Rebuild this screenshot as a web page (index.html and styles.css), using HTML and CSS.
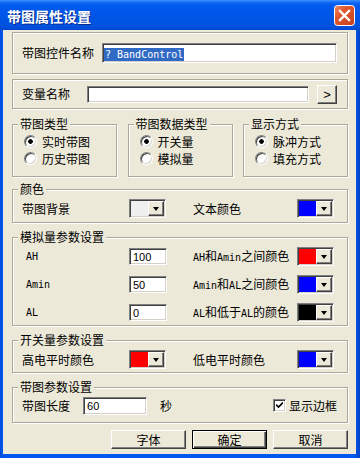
FILE: index.html
```html
<!DOCTYPE html>
<html lang="zh-CN">
<head>
    <meta charset="UTF-8">
    <title>带图属性设置</title>
    <link rel="stylesheet" href="styles.css">
</head>
<body>

<div class="window">
    <div class="titlebar">
        <span class="title">带图属性设置</span>
        <svg class="close" width="21" height="21" viewBox="0 0 21 21">
            <defs>
                <linearGradient id="closeFill" x1="0" y1="0" x2="1" y2="1">
                    <stop offset="0" stop-color="#ee8a6a"/>
                    <stop offset="0.35" stop-color="#e0582f"/>
                    <stop offset="1" stop-color="#c2401c"/>
                </linearGradient>
            </defs>
            <rect x="0.5" y="0.5" width="20" height="20" rx="3" fill="url(#closeFill)" stroke="#fff"/>
            <path d="M6 6 L15 15 M15 6 L6 15" stroke="#fff" stroke-width="2.4" stroke-linecap="square"/>
        </svg>
    </div>

    <div class="frame">
        <div class="client">
            <div class="box box-name">
                <span class="label">带图控件名称</span>
                <div class="edit name-edit"><span class="selected">? BandControl</span></div>
            </div>

            <div class="box box-var">
                <span class="label">变量名称</span>
                <div class="edit var-edit"></div>
                <button class="btn btn-small">&gt;</button>
            </div>

            <div class="types">
                <fieldset class="group type-group">
                    <legend>带图类型</legend>
                    <div class="radio checked"><span class="mark"></span>实时带图</div>
                    <div class="radio"><span class="mark"></span>历史带图</div>
                </fieldset>
                <fieldset class="group type-group">
                    <legend>带图数据类型</legend>
                    <div class="radio checked"><span class="mark"></span>开关量</div>
                    <div class="radio"><span class="mark"></span>模拟量</div>
                </fieldset>
                <fieldset class="group type-group">
                    <legend>显示方式</legend>
                    <div class="radio checked"><span class="mark"></span>脉冲方式</div>
                    <div class="radio"><span class="mark"></span>填充方式</div>
                </fieldset>
            </div>

            <fieldset class="group color-group">
                <legend>颜色</legend>
                <div class="param-row">
                    <span>带图背景</span>
                    <div class="picker"><span class="swatch swatch-light"></span><span class="drop"></span></div>
                    <span class="right-label">文本颜色</span>
                    <div class="picker"><span class="swatch swatch-blue"></span><span class="drop"></span></div>
                </div>
            </fieldset>

            <fieldset class="group analog-group">
                <legend>模拟量参数设置</legend>
                <div class="param-row analog">
                    <span class="ab lat">AH</span>
                    <div class="edit num-edit">100</div>
                    <span class="right-label"><span class="lat">AH</span>和<span class="lat">Amin</span>之间颜色</span>
                    <div class="picker"><span class="swatch swatch-red"></span><span class="drop"></span></div>
                </div>
                <div class="param-row analog">
                    <span class="ab lat">Amin</span>
                    <div class="edit num-edit">50</div>
                    <span class="right-label"><span class="lat">Amin</span>和<span class="lat">AL</span>之间颜色</span>
                    <div class="picker"><span class="swatch swatch-blue"></span><span class="drop"></span></div>
                </div>
                <div class="param-row analog">
                    <span class="ab lat">AL</span>
                    <div class="edit num-edit">0</div>
                    <span class="right-label"><span class="lat">AL</span>和低于<span class="lat">AL</span>的颜色</span>
                    <div class="picker"><span class="swatch swatch-black"></span><span class="drop"></span></div>
                </div>
            </fieldset>

            <fieldset class="group switch-group">
                <legend>开关量参数设置</legend>
                <div class="param-row">
                    <span>高电平时颜色</span>
                    <div class="picker"><span class="swatch swatch-red"></span><span class="drop"></span></div>
                    <span class="right-label">低电平时颜色</span>
                    <div class="picker"><span class="swatch swatch-blue"></span><span class="drop"></span></div>
                </div>
            </fieldset>

            <fieldset class="group band-group">
                <legend>带图参数设置</legend>
                <div class="band-row">
                    <span>带图长度</span>
                    <div class="edit len-edit">60</div>
                    <span class="unit">秒</span>
                    <span class="check">
                        <svg width="7" height="7" viewBox="0 0 7 7"><path d="M0 2.5 L2.5 5 L7 0.5" fill="none" stroke="#000" stroke-width="1.6"/></svg>
                    </span>
                    <span>显示边框</span>
                </div>
            </fieldset>

            <div class="buttons">
                <button class="btn">字体</button>
                <button class="btn btn-default">确定</button>
                <button class="btn">取消</button>
            </div>
        </div>
    </div>
</div>

</body>
</html>
```

FILE: styles.css
```css
* {
    box-sizing: border-box;
    margin: 0;
    padding: 0;
}

html, body {
    width: 360px;
    height: 458px;
    overflow: hidden;
}

body {
    font-family: "Noto Sans CJK SC", "Liberation Sans", sans-serif;
    font-size: 12px;
    line-height: 14px;
    color: #000;
    background: #0055e5;
}

.window {
    display: flex;
    flex-direction: column;
    height: 458px;
}

/* title bar */
.titlebar {
    height: 30px;
    display: flex;
    align-items: center;
    justify-content: space-between;
    padding: 1px 5px 0 7px;
    background: linear-gradient(#3d8fff 0, #0b63f2 3px, #0058ee 7px, #0055e6 18px, #0052df 26px, #0047d2 30px);
}

.title {
    color: #fff;
    font-weight: bold;
    font-size: 14px;
    text-shadow: 1px 1px 0 #0a2a8a;
}

.close {
    display: block;
}

.frame {
    flex: 1;
    padding: 0 4px 4px 3px;
    background: linear-gradient(to right, #0a48d6 0, #0058ee 2px, #0058ee 354px, #0045c8 360px);
}

.client {
    height: 100%;
    background: #ece9d8;
    padding: 2px 8px 0 9px;
    display: flex;
    flex-direction: column;
}

/* etched boxes */
.box, .group {
    border: 1px solid #aca899;
    box-shadow: inset 1px 1px 0 #fff, 1px 1px 0 #fff;
}

.box {
    display: flex;
    align-items: center;
    padding: 0 10px 0 9px;
}

.box-name {
    height: 42px;
}

.box-name .edit {
    flex: 1;
    height: 20px;
    margin-left: 8px;
    padding: 2px 0 0 1px;
}

.box-var {
    height: 30px;
    margin-top: 5px;
}

.var-edit {
    flex: 1;
    height: 17px;
    margin-left: 17px;
    margin-right: 8px;
}

.selected {
    display: inline-block;
    font-family: "DejaVu Sans Mono", monospace;
    font-size: 10px;
    line-height: 13px;
    color: #fff;
    background: #316ac5;
    padding: 0 1px;
}

/* latin text set half-width, like the dialog's system font */
.lat {
    font-family: "DejaVu Sans Mono", monospace;
    font-size: 10px;
}

/* sunken edit */
.edit {
    background: #fff;
    border: 1px solid;
    border-color: #808080 #fff #fff #808080;
    box-shadow: inset 1px 1px 0 #404040, inset -1px -1px 0 #d4d0c8;
}

.num-edit, .len-edit {
    font-family: "Liberation Sans", sans-serif;
    font-size: 11px;
    line-height: 14px;
    padding: 1px 0 0 3px;
}

.num-edit {
    width: 38px;
    height: 17px;
}

/* raised buttons */
.btn {
    font-family: "Noto Sans CJK SC", "Liberation Sans", sans-serif;
    font-size: 12px;
    background: #ece9d8;
    border: 1px solid;
    border-color: #fff #404040 #404040 #fff;
    box-shadow: inset -1px -1px 0 #808080;
    color: #000;
}

.btn-small {
    width: 20px;
    height: 19px;
    font-family: "Liberation Sans", sans-serif;
    font-size: 13px;
    line-height: 15px;
}

.btn-default {
    border-color: #000;
    box-shadow: inset 1px 1px 0 #fff, inset -1px -1px 0 #404040, inset -2px -2px 0 #808080;
}

/* group boxes */
.group {
    padding: 0;
    min-width: 0;
}

.group legend {
    margin-left: 5px;
    padding: 0 2px;
    line-height: 14px;
    background: #ece9d8;
}

.types {
    display: flex;
    justify-content: space-between;
    margin-top: 8px;
}

.type-group {
    width: 105px;
    height: 60px;
    padding-top: 2px;
}

.radio {
    display: flex;
    align-items: center;
    height: 17px;
    padding-left: 11px;
}

.radio .mark {
    width: 13px;
    height: 13px;
    margin-right: 5px;
    border-radius: 50%;
    border: 1px solid;
    border-color: #808080 #fff #fff #808080;
    box-shadow: inset 1px 1px 0 #404040, inset -1px -1px 0 #d4d0c8;
    background: #fff;
}

.radio.checked .mark {
    background: radial-gradient(circle, #000 0, #000 2px, #fff 2.6px);
}

.color-group {
    height: 41px;
    margin-top: 5px;
    padding-top: 3px;
}

.analog-group {
    height: 96px;
    margin-top: 7px;
    padding-top: 3px;
    display: flex;
    flex-direction: column;
    gap: 9px;
}

.switch-group {
    height: 40px;
    margin-top: 7px;
    padding-top: 3px;
}

.band-group {
    height: 43px;
    margin-top: 7px;
    padding-top: 2px;
}

.param-row {
    display: grid;
    grid-template-columns: 107px 37px 1fr 37px;
    align-items: center;
    height: 19px;
    padding: 0 13px 0 9px;
}

.param-row .right-label {
    padding-left: 27px;
    white-space: nowrap;
}

.analog .ab {
    padding-left: 4px;
}

/* colour picker */
.picker {
    display: flex;
    width: 37px;
    height: 19px;
    border: 1px solid;
    border-color: #808080 #fff #fff #808080;
    box-shadow: inset 1px 1px 0 #404040;
    padding: 1px;
    background: #d4d0c8;
}

.swatch {
    flex: 1;
}

.swatch-light { background: #f0f0f0; }
.swatch-blue { background: #0000ff; }
.swatch-red { background: #ff0000; }
.swatch-black { background: #000; }

.drop {
    width: 16px;
    display: flex;
    align-items: center;
    justify-content: center;
    background: #ece9d8;
    border: 1px solid;
    border-color: #fff #404040 #404040 #fff;
    box-shadow: inset -1px -1px 0 #808080;
}

.drop::after {
    content: "";
    border-style: solid;
    border-width: 4px 3.5px 0;
    border-color: #000 transparent transparent;
}

/* band row */
.band-row {
    display: flex;
    align-items: center;
    height: 19px;
    padding: 0 10px 0 9px;
}

.len-edit {
    width: 64px;
    height: 18px;
    margin-left: 13px;
}

.unit {
    margin-left: 13px;
}

.check {
    display: flex;
    align-items: center;
    justify-content: center;
    width: 13px;
    height: 13px;
    margin-left: auto;
    margin-right: 3px;
    background: #fff;
    border: 1px solid;
    border-color: #808080 #fff #fff #808080;
    box-shadow: inset 1px 1px 0 #404040, inset -1px -1px 0 #d4d0c8;
}

.buttons {
    display: flex;
    justify-content: flex-end;
    gap: 6px;
    margin-top: 7px;
}

.buttons .btn {
    width: 75px;
    height: 19px;
    line-height: 15px;
}
```
